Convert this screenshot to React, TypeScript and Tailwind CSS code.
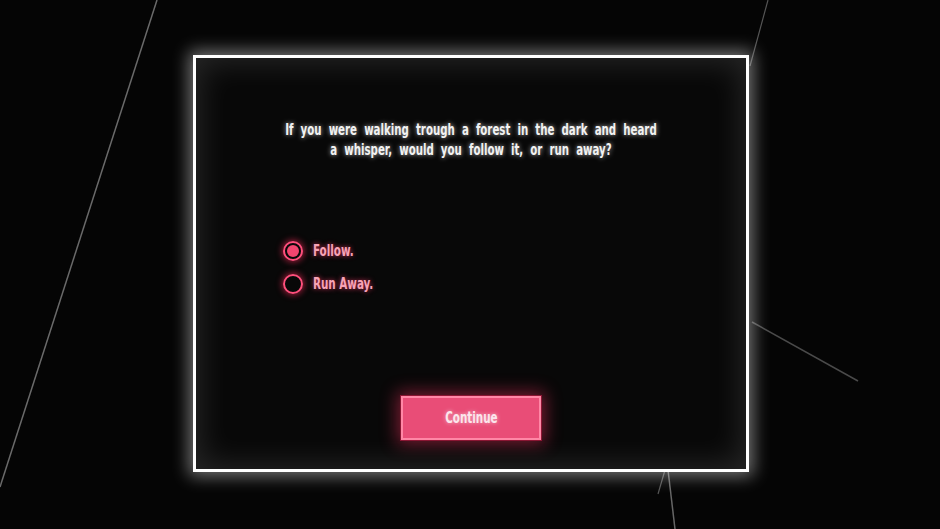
import React, { useState } from "react";

const options = ["Follow.", "Run Away."];

export default function App() {
  const [picked, setPicked] = useState(0);

  return (
    <div className="relative w-[940px] h-[529px] overflow-hidden bg-[#050505] font-['DejaVu_Sans_Condensed','Liberation_Sans',sans-serif]">
      {/* faint light lines behind the frame */}
      <svg className="absolute inset-0" width="940" height="529" viewBox="0 0 940 529">
        <line x1="157" y1="0" x2="0" y2="487" stroke="#6a6a6a" strokeWidth="1.5" />
        <line x1="768" y1="0" x2="750" y2="66" stroke="#555" strokeWidth="1.2" />
        <line x1="752" y1="322" x2="858" y2="381" stroke="#4a4a4a" strokeWidth="1.5" />
        <line x1="668" y1="470" x2="675" y2="529" stroke="#666" strokeWidth="1.5" />
        <line x1="665" y1="470" x2="658" y2="494" stroke="#555" strokeWidth="1.2" />
      </svg>

      <div className="relative pl-[193px] pt-[55px]">
        <div className="w-[556px] h-[417px] border-[3px] border-white bg-[#080808] shadow-[0_0_16px_4px_rgba(255,255,255,0.45),inset_0_0_30px_5px_rgba(255,255,255,0.12)] flex flex-col items-center">
          <p className="mt-[62px] w-[540px] scale-x-[0.71] text-center text-[16px] leading-[20px] font-bold text-[#f2f2f2] [word-spacing:5px] [text-shadow:0_0_6px_rgba(255,255,255,0.7)]">
            If you were walking trough a forest in the dark and heard
            <br />
            a whisper, would you follow it, or run away?
          </p>

          <div className="self-start ml-[87px] mt-[81px] flex flex-col gap-[13px]">
            {options.map((o, i) => (
              <button
                key={o}
                onClick={() => setPicked(i)}
                className="flex items-center gap-[10px] cursor-pointer"
              >
                <span className="w-[20px] h-[20px] rounded-full border-2 border-[#ff4f7c] flex items-center justify-center shadow-[0_0_6px_1px_rgba(255,40,90,0.6)]">
                  {picked === i && (
                    <span className="w-[12px] h-[12px] rounded-full bg-[#f2456f]" />
                  )}
                </span>
                <span className="origin-left scale-x-[0.72] text-[16px] leading-[20px] font-bold text-[#f7a3b6] [text-shadow:0_0_6px_rgba(255,60,110,0.8)]">
                  {o}
                </span>
              </button>
            ))}
          </div>

          <button className="mt-[102px] w-[140px] h-[44px] bg-[#e94d77] border-2 border-[#ff87a6] outline outline-1 outline-[#8a1633] shadow-[0_0_16px_4px_rgba(255,50,100,0.45)] text-[16px] font-bold text-[#fbe6ec]">
            <span className="inline-block scale-x-[0.72] [text-shadow:0_0_5px_rgba(255,255,255,0.6)]">Continue</span>
          </button>
        </div>
      </div>
    </div>
  );
}
